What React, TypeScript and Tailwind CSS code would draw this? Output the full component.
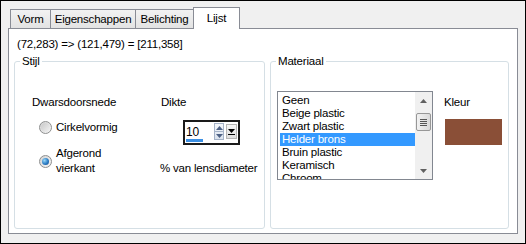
import React from 'react';

const font = "font-['Liberation_Sans',Arial,sans-serif]";

const tabs = [
    { label: 'Vorm', w: 'w-[41px]' },
    { label: 'Eigenschappen', w: 'w-[86px]' },
    { label: 'Belichting', w: 'w-[59px]' },
];

const materials = ['Geen', 'Beige plastic', 'Zwart plastic', 'Helder brons', 'Bruin plastic', 'Keramisch', 'Chroom'];

const Radio = ({ checked }: { checked?: boolean }) => (
    <span className="w-[13px] h-[13px] shrink-0 rounded-full border border-[#8e8f8f] bg-gradient-to-br from-[#d4d4d4] to-[#f6f6f6] flex items-center justify-center">
        {checked ? (
            <span className="w-[7px] h-[7px] rounded-full bg-[radial-gradient(circle_at_35%_35%,#9ad8f8,#2a7cc4_55%,#1a4a8a)]" />
        ) : (
            <span className="w-[9px] h-[9px] rounded-full bg-gradient-to-br from-[#c9c9c9] to-[#f2f2f2]" />
        )}
    </span>
);

const Tri = ({ up }: { up?: boolean }) => (
    <svg width="7" height="4" viewBox="0 0 7 4">
        <path d={up ? 'M0 4 L3.5 0 L7 4 Z' : 'M0 0 L3.5 4 L7 0 Z'} fill="#4d6185" />
    </svg>
);

export default function App() {
    return (
        <div className={`w-[526px] h-[244px] border border-black bg-[#f0f0f0] pt-[6px] pl-[7px] pr-[7px] text-[11.5px] leading-[15px] tracking-[-0.2px] text-black ${font}`}>
            {/* tab strip */}
            <div className="h-[21px] flex items-end pl-[2px]">
                {tabs.map((t, i) => (
                    <div
                        key={t.label}
                        className={`${t.w} h-[19px] ${i > 0 ? '-ml-px' : ''} border border-b-0 border-[#898c95] bg-gradient-to-b from-[#f2f2f2] to-[#e3e3e3] flex items-center justify-center pt-[1px]`}
                    >
                        {t.label}
                    </div>
                ))}
                <div className="w-[47px] h-[22px] -ml-px -mb-px relative z-10 border border-b-0 border-[#898c95] bg-white flex justify-center pt-[3px]">
                    Lijst
                </div>
            </div>

            {/* panel */}
            <div className="h-[206px] border border-[#898c95] bg-white">
                <div className="pl-[8px] mt-[8px]">(72,283) =&gt; (121,479) = [211,358]</div>

                <div className="flex gap-[5px] pl-[5px] pr-[6px] mt-[2px]">
                    <fieldset className="w-[251px] h-[175px] border border-[#d5dfe5] rounded-[3px]">
                        <legend className="ml-[5px] px-[2px]">Stijl</legend>
                        <div className="grid grid-cols-[129px_1fr] pl-[17px] pt-[26px]">
                            <div>Dwarsdoorsnede</div>
                            <div>Dikte</div>
                            <div className="flex flex-col">
                                <label className="flex items-center gap-[4px] mt-[10px] ml-[7px]">
                                    <Radio />
                                    <span>Cirkelvormig</span>
                                </label>
                                <label className="flex items-center gap-[4px] mt-[11px] ml-[7px]">
                                    <Radio checked />
                                    <span>Afgerond<br />vierkant</span>
                                </label>
                            </div>
                            <div className="flex flex-col">
                                <div className="ml-[22px] mt-[10px] w-[57px] h-[25px] border-2 border-[#1a1a1a] bg-white flex relative">
                                    <span className="pl-[1px] pt-[3px] text-[12px]">10</span>
                                    <div className="absolute left-[1px] bottom-[1px] w-[17px] h-[3px] bg-[#3b8fe3]" />
                                    <div className="ml-auto mt-[1px] flex flex-col w-[10px] h-[17px] border border-[#a5b3c8] bg-gradient-to-b from-[#f4f7fb] to-[#dbe3ee]">
                                        <div className="flex-1 flex items-center justify-center border-b border-[#a5b3c8]"><Tri up /></div>
                                        <div className="flex-1 flex items-center justify-center"><Tri /></div>
                                    </div>
                                    <div className="ml-[2px] mr-[1px] mt-[2px] w-[11px] h-[15px] border border-[#b5b5b5] bg-gradient-to-b from-[#f6f6f6] to-[#dedede] flex flex-col items-center justify-center gap-[1px]">
                                        <svg width="7" height="4" viewBox="0 0 7 4"><path d="M0 0 L3.5 4 L7 0 Z" fill="#000" /></svg>
                                        <span className="w-[7px] h-px bg-black" />
                                    </div>
                                </div>
                                <div className="-ml-px mt-[16px]">% van lensdiameter</div>
                            </div>
                        </div>
                    </fieldset>

                    <fieldset className="w-[239px] h-[175px] border border-[#d5dfe5] rounded-[3px]">
                        <legend className="ml-[5px] px-[2px]">Materiaal</legend>
                        <div className="flex pl-[6px] pt-[22px]">
                            <div className="w-[156px] h-[89px] border border-[#828790] bg-white flex">
                                <div className="flex-1 pl-[2px] pt-[2px] overflow-hidden">
                                    {materials.map(m => (
                                        <div
                                            key={m}
                                            className={`h-[13px] leading-[13px] pl-[2px] whitespace-nowrap ${m === 'Helder brons' ? 'bg-[#3399ff] text-white' : ''}`}
                                        >
                                            {m}
                                        </div>
                                    ))}
                                </div>
                                <div className="w-[17px] bg-[#f0f0f0] flex flex-col items-center">
                                    <div className="h-[17px] flex items-center justify-center">
                                        <svg width="7" height="4" viewBox="0 0 7 4"><path d="M0 4 L3.5 0 L7 4 Z" fill="#606060" /></svg>
                                    </div>
                                    <div className="w-[15px] h-[18px] mt-[4px] rounded-[2px] border border-[#979797] bg-gradient-to-r from-[#f2f2f2] to-[#d9d9d9] flex flex-col items-center justify-center gap-[1px]">
                                        <span className="w-[7px] h-px bg-[#555]" />
                                        <span className="w-[7px] h-px bg-[#555]" />
                                        <span className="w-[7px] h-px bg-[#555]" />
                                        <span className="w-[7px] h-px bg-[#555]" />
                                    </div>
                                    <div className="mt-auto h-[17px] flex items-center justify-center">
                                        <svg width="7" height="4" viewBox="0 0 7 4"><path d="M0 0 L3.5 4 L7 0 Z" fill="#606060" /></svg>
                                    </div>
                                </div>
                            </div>
                            <div className="ml-[11px] flex flex-col">
                                <div className="mt-[4px]">Kleur</div>
                                <div className="mt-[9px] ml-px w-[57px] h-[26px] bg-[#8a4f37]" />
                            </div>
                        </div>
                    </fieldset>
                </div>
            </div>
        </div>
    );
}
